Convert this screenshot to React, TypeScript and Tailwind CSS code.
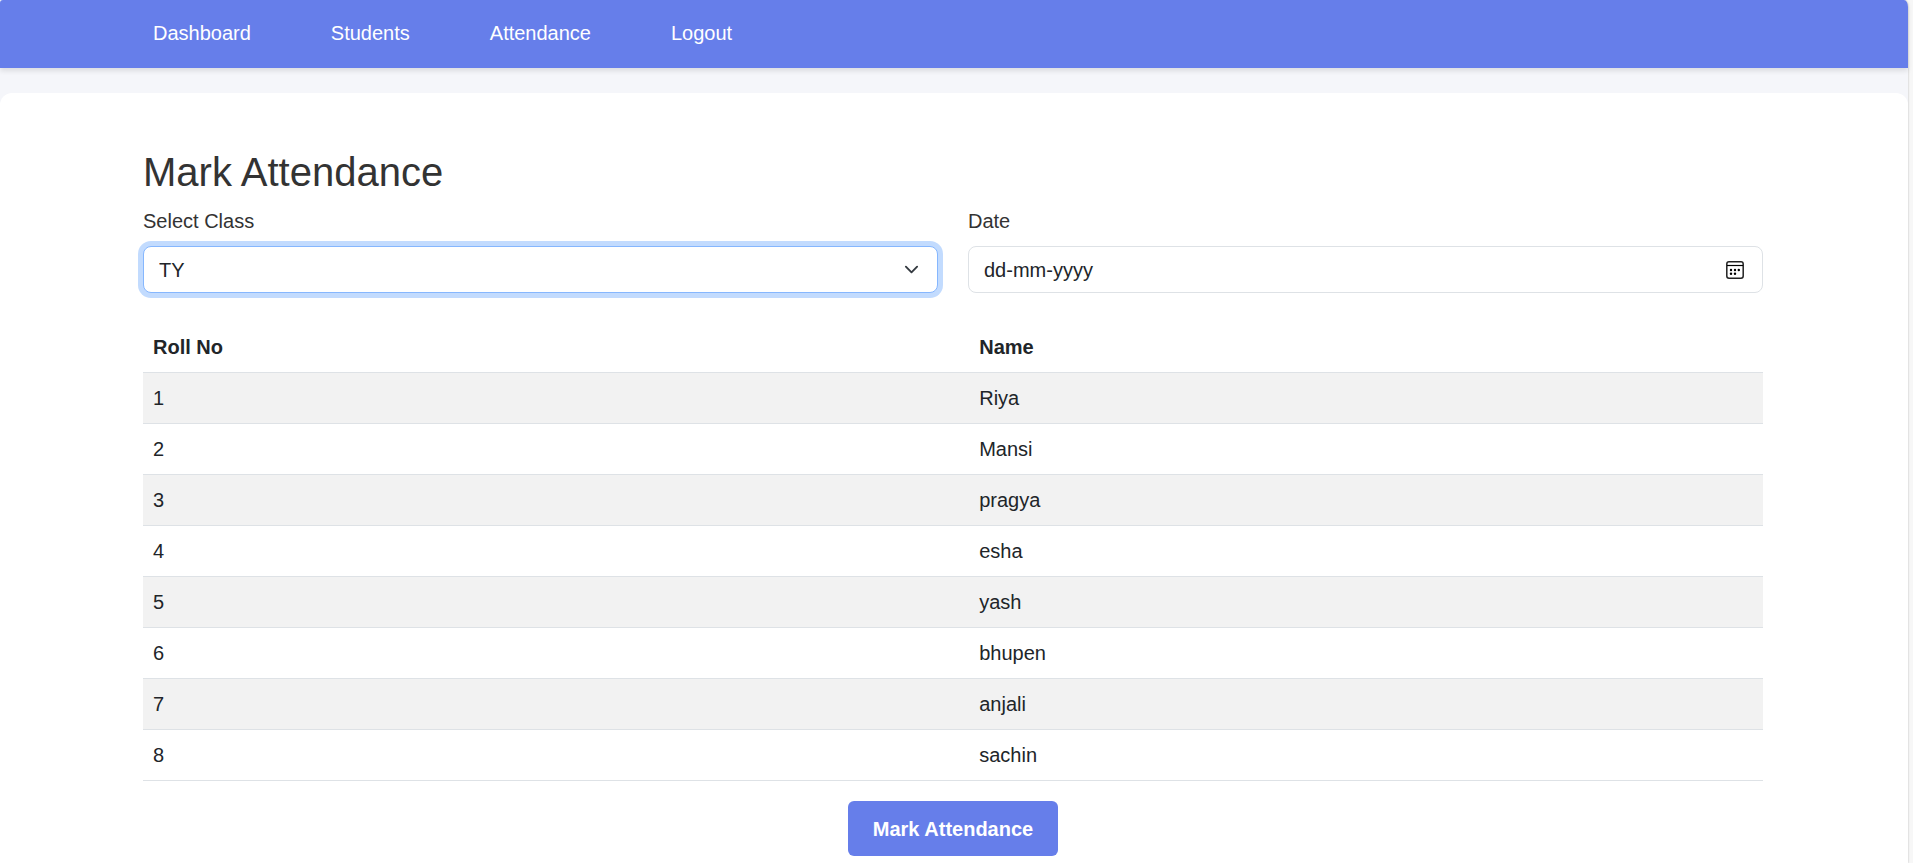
import { useState } from "react";

const links = ["Dashboard", "Students", "Attendance", "Logout"];
const classes = ["FY", "SY", "TY"];
const students = ["Riya", "Mansi", "pragya", "esha", "yash", "bhupen", "anjali", "sachin"];

function Container({ children }: { children: React.ReactNode }) {
  return (
    <div className="pr-0.5">
      <div className="mx-auto max-w-[1650px] px-[15px]">{children}</div>
    </div>
  );
}

function Navbar() {
  return (
    <nav className="rounded-tl-[3px] rounded-tr-[4px_7px] bg-[#667eea] pt-[18px] pb-5 shadow-[0_3px_5px_rgba(0,0,0,0.1)]">
      <Container>
        <ul className="flex flex-wrap gap-x-20 px-2.5">
          {links.map((label) => (
            <li key={label}>
              <a href="#" className="block text-white">
                {label}
              </a>
            </li>
          ))}
        </ul>
      </Container>
    </nav>
  );
}

function CalendarIcon() {
  return (
    <svg viewBox="0 0 18 18" className="size-[18px]" fill="none" aria-hidden="true">
      <rect x="0.8" y="0.8" width="16.4" height="16.4" rx="2.2" stroke="#222" strokeWidth="1.5" />
      <path d="M1 4.5h16" stroke="#000" strokeWidth="1.2" />
      <g fill="#000">
        <circle cx="5" cy="9" r="1.2" />
        <circle cx="9" cy="9" r="1.2" />
        <circle cx="12.8" cy="9" r="1.2" />
        <circle cx="5" cy="12.7" r="1.2" />
        <circle cx="9" cy="12.7" r="1.2" />
      </g>
    </svg>
  );
}

export default function App() {
  const [selectedClass, setSelectedClass] = useState("TY");
  const [date, setDate] = useState("");

  return (
    <div className="min-h-screen bg-[#f7f7f7] pr-[5px] font-['Liberation_Sans',Arial,sans-serif] text-[20px] leading-[30px] text-[#212529]">
      <div className="flex min-h-screen flex-col rounded-tr-[4px_7px] bg-[#f5f6fa] shadow-[0_0_2px_rgba(0,0,0,0.3)]">
        <Navbar />
        <main className="mt-[25px] flex-1 rounded-t-xl bg-white pt-[55px]">
          <Container>
            <h2 className="mb-2.5 text-[40px] leading-[48px] text-[#333]">Mark Attendance</h2>
            <form onSubmit={(e) => e.preventDefault()}>
              <div className="mb-[29px] grid grid-cols-2 gap-[30px]">
                <div>
                  <label htmlFor="class" className="mb-2.5 block text-[#333]">
                    Select Class
                  </label>
                  <div className="relative">
                    <select
                      id="class"
                      value={selectedClass}
                      onChange={(e) => setSelectedClass(e.target.value)}
                      className="block h-[47px] w-full appearance-none rounded-lg border border-[#86b7fe] bg-white pr-11 pl-[15px] shadow-[0_0_0_5px_rgba(13,110,253,0.25)] outline-none"
                    >
                      {classes.map((name) => (
                        <option key={name}>{name}</option>
                      ))}
                    </select>
                    <svg
                      viewBox="0 0 16 16"
                      className="pointer-events-none absolute top-4 right-[19px] size-[15px]"
                      fill="none"
                      stroke="#343a40"
                      strokeWidth="2"
                      strokeLinecap="round"
                      strokeLinejoin="round"
                      aria-hidden="true"
                    >
                      <path d="m2 5 6 6 6-6" />
                    </svg>
                  </div>
                </div>
                <div>
                  <label htmlFor="date" className="mb-2.5 block text-[#333]">
                    Date
                  </label>
                  <div className="flex h-[47px] items-center rounded-lg border border-[#dee2e6] bg-white pr-[18px] pl-[15px]">
                    <input
                      id="date"
                      type="text"
                      placeholder="dd-mm-yyyy"
                      value={date}
                      onChange={(e) => setDate(e.target.value)}
                      className="min-w-0 flex-1 bg-transparent outline-none placeholder:text-[#212529]"
                    />
                    <button type="button" aria-label="Open calendar">
                      <CalendarIcon />
                    </button>
                  </div>
                </div>
              </div>
              <table className="mb-5 w-full table-fixed border-collapse text-left">
                <thead>
                  <tr className="border-b border-[#dee2e6]">
                    <th className="w-[51%] p-2.5 font-bold">Roll No</th>
                    <th className="p-2.5 font-bold">Name</th>
                  </tr>
                </thead>
                <tbody>
                  {students.map((name, i) => (
                    <tr key={name} className="border-b border-[#dee2e6] odd:bg-[#f2f2f2]">
                      <td className="p-2.5">{i + 1}</td>
                      <td className="p-2.5">{name}</td>
                    </tr>
                  ))}
                </tbody>
              </table>
              <div className="flex justify-center">
                <button
                  type="submit"
                  className="h-[55px] rounded-md bg-[#667eea] px-[25px] font-bold text-white"
                >
                  Mark Attendance
                </button>
              </div>
            </form>
          </Container>
        </main>
      </div>
    </div>
  );
}
